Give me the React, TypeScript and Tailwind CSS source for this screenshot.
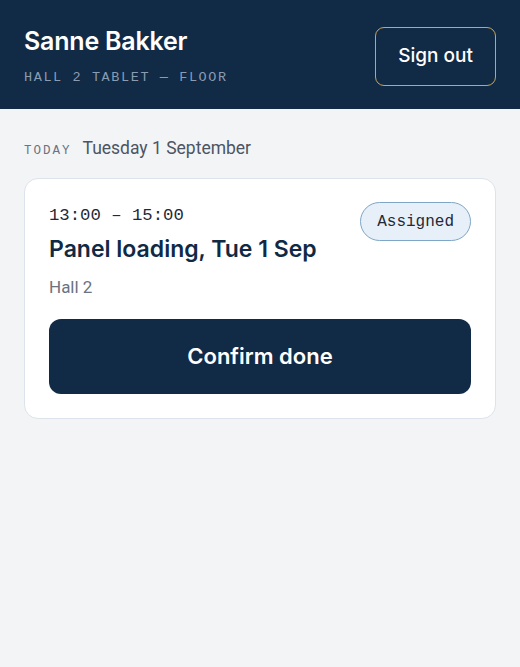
const heading = "font-['Inter','Liberation_Sans',sans-serif]"
const body = "font-['Roboto','Open_Sans',sans-serif]"
const mono = "font-['Liberation_Mono','DejaVu_Sans_Mono',monospace]"

function Header() {
  return (
    <header className="bg-[#112a46] h-[109px] flex items-center justify-between pl-6 pr-6">
      <div className="flex flex-col mt-[5px]">
        <h1 className={`${heading} text-[25px] font-semibold text-white leading-8 tracking-[-0.2px]`}>Sanne Bakker</h1>
        <p className={`${mono} text-[13.5px] tracking-[1.6px] text-[#8a9cb1] mt-[11px]`}>HALL 2 TABLET — FLOOR</p>
      </div>
      <button className={`${heading} mt-[4px] w-[121px] h-[59px] rounded-[9px] border-[1.5px] border-[#cda453] text-white text-[19px] font-medium`}>
        Sign out
      </button>
    </header>
  )
}

function ShiftCard() {
  return (
    <div className="bg-white border border-[#dde3ea] rounded-[14px] px-6 pt-6 pb-6">
      <div className="flex items-start justify-between">
        <div className="flex flex-col">
          <span className={`${mono} text-[17.3px] text-[#1f2937] leading-6 mt-[1px]`}>13:00 – 15:00</span>
          <h2 className={`${heading} text-[23px] font-semibold text-[#102a46] leading-7 mt-[7px]`}>Panel loading, Tue 1 Sep</h2>
          <span className={`${body} text-[17px] text-[#6b7280] leading-6 mt-[12px]`}>Hall 2</span>
        </div>
        <span className={`${mono} mt-[-1px] h-[39px] px-[16px] flex items-center rounded-full bg-[#e7f0f8] border border-[#7ea6c6] text-[16px] text-[#1f2937]`}>
          Assigned
        </span>
      </div>
      <button className={`${heading} mt-[20px] w-full h-[75px] rounded-[12px] bg-[#112a46] text-white text-[22px] font-semibold`}>
        Confirm done
      </button>
    </div>
  )
}

export default function App() {
  return (
    <div className="w-[520px] min-h-[667px] bg-[#f3f4f6]">
      <Header />
      <main className="px-6 pt-[26px]">
        <div className="flex items-baseline gap-[11px] mb-[17px]">
          <span className={`${mono} text-[12.5px] tracking-[2px] text-[#6b7280]`}>TODAY</span>
          <span className={`${body} text-[17.5px] text-[#4b5563]`}>Tuesday 1 September</span>
        </div>
        <ShiftCard />
      </main>
    </div>
  )
}
